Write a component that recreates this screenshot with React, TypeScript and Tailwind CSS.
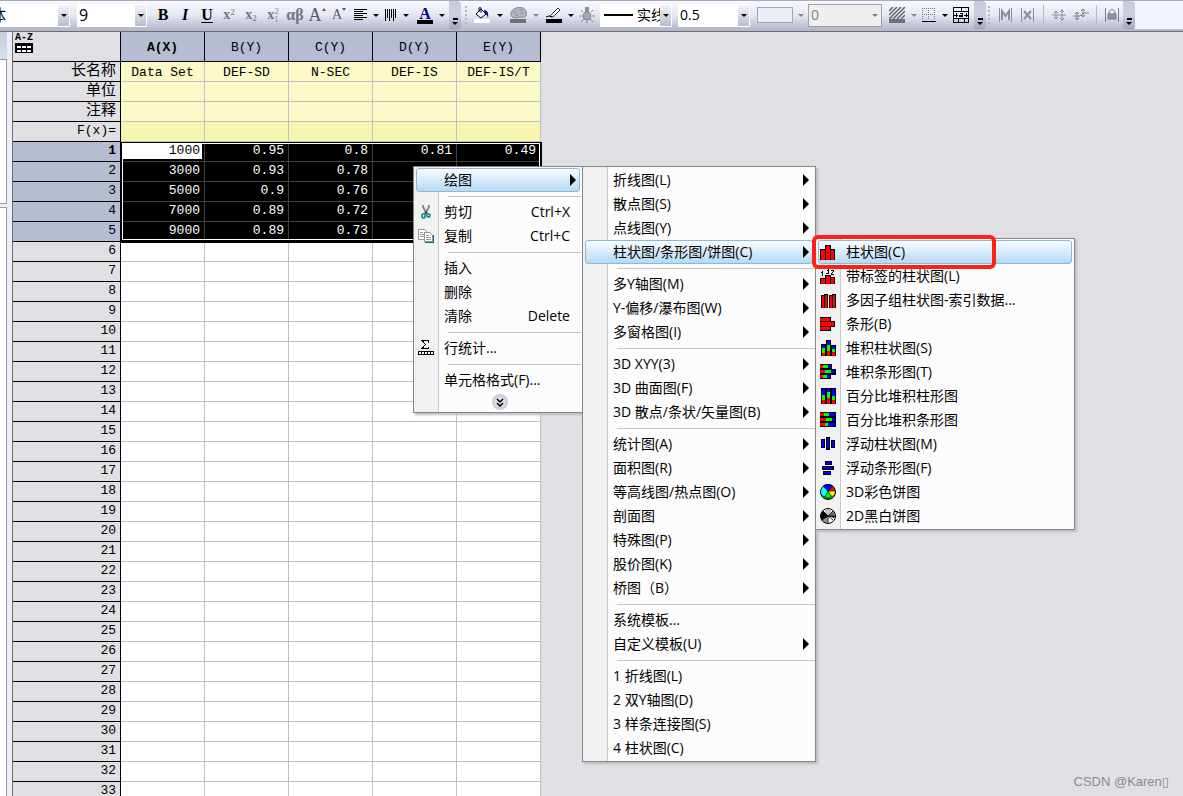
import type { ReactNode } from "react";

type Rect = [x: number, y: number, w: number, h: number, fill: string];

type MenuEntry = {
    label: string;
    shortcut?: string;
    icon?: ReactNode;
    arrow?: boolean;
    active?: boolean;
};

const R = "#ff0000";
const G = "#00ff00";
const B = "#0000ff";
const K = "#000000";

const uiFont = "font-['Open_Sans','Noto_Sans_CJK_SC',sans-serif]";
const sheetFont = "font-['Liberation_Mono','Noto_Sans_CJK_SC',monospace]";

/* ---------- menu icons ---------- */

function PixelIcon({ rects, children }: { rects: Rect[]; children?: ReactNode }) {
    return (
        <svg width="16" height="16" viewBox="0 0 16 16" shapeRendering="crispEdges" aria-hidden="true">
            {rects.map(([x, y, w, h, fill], i) => (
                <rect key={i} x={x} y={y} width={w} height={h} fill={fill} />
            ))}
            {children}
        </svg>
    );
}

const columnIcon = (
    <PixelIcon
        rects={[
            [0, 5, 6, 11, K], [5, 1, 6, 15, K], [10, 5, 5, 11, K],
            [1, 6, 4, 10, R], [6, 2, 4, 14, R], [11, 6, 3, 10, R],
        ]}
    />
);

const labeledColumnIcon = (
    <PixelIcon
        rects={[
            [0, 10, 6, 6, K], [5, 7, 6, 9, K], [10, 9, 5, 7, K],
            [1, 11, 4, 5, R], [6, 8, 4, 8, R], [11, 10, 3, 6, R],
            // 1
            [2, 3, 1, 5, K], [1, 4, 1, 1, K],
            // 3
            [6, 0, 3, 1, K], [8, 1, 1, 4, K], [7, 2, 1, 1, K], [6, 5, 3, 1, K],
            // 2
            [11, 2, 3, 1, K], [13, 3, 1, 1, K], [12, 4, 1, 1, K], [11, 5, 1, 1, K], [11, 6, 3, 1, K],
        ]}
    />
);

const multiFactorIcon = (
    <PixelIcon
        rects={[
            [1, 3, 4, 13, K], [4, 2, 4, 14, K], [9, 3, 4, 13, K], [12, 2, 4, 14, K],
            [2, 4, 2, 12, R], [5, 3, 2, 13, R], [10, 4, 2, 12, R], [13, 3, 2, 13, R],
        ]}
    />
);

const barIcon = (
    <PixelIcon
        rects={[
            [0, 1, 11, 5, K], [0, 5, 15, 6, K], [0, 10, 11, 5, K],
            [0, 2, 10, 3, R], [0, 6, 14, 4, R], [0, 11, 10, 3, R],
        ]}
    />
);

const stackedColumnIcon = (
    <PixelIcon
        rects={[
            [1, 4, 5, 12, K], [6, 0, 5, 16, K], [11, 5, 5, 11, K],
            [2, 5, 3, 3, B], [2, 8, 3, 5, G], [2, 13, 3, 3, R],
            [7, 1, 3, 4, B], [7, 5, 3, 6, G], [7, 11, 3, 5, R],
            [12, 6, 3, 3, B], [12, 9, 3, 3, G], [12, 12, 3, 4, R],
        ]}
    />
);

const stackedBarIcon = (
    <PixelIcon
        rects={[
            [0, 0, 12, 5, K], [0, 5, 16, 6, K], [0, 10, 11, 5, K],
            [0, 1, 3, 3, R], [3, 1, 5, 3, G], [8, 1, 3, 3, B],
            [0, 6, 5, 3, R], [5, 6, 6, 3, G], [11, 6, 4, 3, B],
            [0, 11, 3, 3, R], [3, 11, 4, 3, G], [7, 11, 3, 3, B],
        ]}
    />
);

const percentColumnIcon = (
    <PixelIcon
        rects={[
            [1, 0, 15, 16, K],
            [2, 1, 3, 6, B], [2, 7, 3, 5, G], [2, 12, 3, 4, R],
            [7, 1, 3, 3, B], [7, 4, 3, 6, G], [7, 10, 3, 6, R],
            [12, 1, 3, 7, B], [12, 8, 3, 4, G], [12, 12, 3, 4, R],
        ]}
    />
);

const percentBarIcon = (
    <PixelIcon
        rects={[
            [0, 0, 16, 15, K],
            [0, 1, 4, 3, R], [4, 1, 5, 3, G], [9, 1, 6, 3, B],
            [0, 6, 6, 3, R], [6, 6, 6, 3, G], [12, 6, 3, 3, B],
            [0, 11, 5, 3, R], [5, 11, 3, 3, G], [8, 11, 7, 3, B],
        ]}
    />
);

const floatColumnIcon = (
    <PixelIcon
        rects={[
            [1, 3, 4, 9, K], [6, 1, 4, 13, K], [11, 4, 4, 8, K],
            [2, 4, 2, 7, B], [7, 2, 2, 11, B], [12, 5, 2, 6, B],
        ]}
    />
);

const floatBarIcon = (
    <PixelIcon
        rects={[
            [5, 1, 7, 4, K], [2, 6, 12, 4, K], [3, 11, 8, 4, K],
            [6, 2, 5, 2, B], [3, 7, 10, 2, B], [4, 12, 6, 2, B],
        ]}
    />
);

const colorPieIcon = (
    <svg width="16" height="16" viewBox="0 0 16 16" aria-hidden="true">
        <circle cx="8" cy="8" r="7" fill="#00ffff" />
        <path d="M8 7 3 2a7 7 0 0 1 10 0Z" fill="#0000ff" />
        <path d="M8 7 13 2a7 7 0 0 1 2 5Z" fill="#ff0000" />
        <path d="M8 7h7a7 7 0 0 1-3 6Z" fill="#ffff00" />
        <path d="m8 7 4 6a7 7 0 0 1-7 0Z" fill="#00ff00" />
        <path d="M1 9q2 4 7 4t7-4q-1 6-7 6T1 9Z" fill="#008000" />
        <path d="M10 13q4-1 5-4 0 4-5 6Z" fill="#808000" />
        <path d="M8 7 3 2M8 7l5-5M8 7h7M8 7l4 6M8 7l-3 6" stroke="#000" strokeWidth=".7" />
        <circle cx="8" cy="8" r="7.500" fill="none" stroke="#000" />
    </svg>
);

const monoPieIcon = (
    <svg width="16" height="16" viewBox="0 0 16 16" aria-hidden="true">
        <circle cx="8" cy="8" r="7" fill="#fff" />
        <path d="M8 8 3 3a7 7 0 0 0-1 9Z" fill="#000" />
        <path d="m8 8-6 4a7 7 0 0 0 6 3Z" fill="#909090" />
        <path d="m8 8 5-5a7 7 0 0 1 2 5Z" fill="#707070" />
        <path d="M8 8h7a7 7 0 0 1-1 2Z" fill="#000" />
        <path d="M6 2v4M8 1v6M10 2v4" stroke="#888" />
        <path d="M8 8 3 3M8 8l5-5M8 8h7M8 8v7M8 8l5 4M8 8l-6 4" stroke="#000" strokeWidth=".8" />
        <circle cx="8" cy="8" r="7.500" fill="none" stroke="#000" />
    </svg>
);

const cutIcon = (
    <svg width="16" height="16" viewBox="0 0 16 16" fill="none" aria-hidden="true">
        <path d="M5 1v2l4 7M11 1v2L7 10" stroke="#8c8c8c" strokeWidth="2" />
        <path d="m8 7 1 3M8 7l-1 3" stroke="#104060" />
        <rect x="4" y="10" width="3" height="4" rx="1" stroke="#008080" strokeWidth="1.5" />
        <rect x="9" y="10" width="3" height="3" rx="1" stroke="#008080" strokeWidth="1.5" />
    </svg>
);

const copyIcon = (
    <svg width="16" height="16" viewBox="0 0 16 16" fill="none" shapeRendering="crispEdges" aria-hidden="true">
        <path d="M.5 1.5h6l3 3v7h-9Z" fill="#fff" stroke="#9a9a9a" />
        <path d="M2 4.500h3M2 6.500h4M2 8.500h4" stroke="#9a9a9a" />
        <path d="M6.500 4.500h5l3 3v6h-8Z" fill="#fff" stroke="#8a9a9a" />
        <path d="M8 7.500h3M8 9.500h5M8 11.500h5" stroke="#9a9a9a" />
        <path d="M15 7v7H7" stroke="#107070" />
    </svg>
);

const statsIcon = (
    <svg width="16" height="16" viewBox="0 0 16 16" fill="none" shapeRendering="crispEdges" aria-hidden="true">
        <path d="M10.500 3V.5H4L7.500 4.500 4 8.500h6.500V7" stroke="#000" />
        <path d="M.5 11.500h15v3H.5ZM3.500 12v2M6.500 12v2M9.500 12v2M12.500 12v2" fill="#fff" stroke="#000" />
    </svg>
);

/* ---------- menus ---------- */

const contextEntries: (MenuEntry | null)[] = [
    { label: "绘图", arrow: true, active: true },
    null,
    { label: "剪切", shortcut: "Ctrl+X", icon: cutIcon },
    { label: "复制", shortcut: "Ctrl+C", icon: copyIcon },
    null,
    { label: "插入" },
    { label: "删除" },
    { label: "清除", shortcut: "Delete" },
    null,
    { label: "行统计...", icon: statsIcon },
    null,
    { label: "单元格格式(F)..." },
];

const plotEntries: (MenuEntry | null)[] = [
    { label: "折线图(L)", arrow: true },
    { label: "散点图(S)", arrow: true },
    { label: "点线图(Y)", arrow: true },
    { label: "柱状图/条形图/饼图(C)", arrow: true, active: true },
    null,
    { label: "多Y轴图(M)", arrow: true },
    { label: "Y-偏移/瀑布图(W)", arrow: true },
    { label: "多窗格图(I)", arrow: true },
    null,
    { label: "3D XYY(3)", arrow: true },
    { label: "3D 曲面图(F)", arrow: true },
    { label: "3D 散点/条状/矢量图(B)", arrow: true },
    null,
    { label: "统计图(A)", arrow: true },
    { label: "面积图(R)", arrow: true },
    { label: "等高线图/热点图(O)", arrow: true },
    { label: "剖面图", arrow: true },
    { label: "特殊图(P)", arrow: true },
    { label: "股价图(K)", arrow: true },
    { label: "桥图（B）", arrow: true },
    null,
    { label: "系统模板..." },
    { label: "自定义模板(U)", arrow: true },
    null,
    { label: "1 折线图(L)" },
    { label: "2 双Y轴图(D)" },
    { label: "3 样条连接图(S)" },
    { label: "4 柱状图(C)" },
];

const chartEntries: (MenuEntry | null)[] = [
    { label: "柱状图(C)", icon: columnIcon, active: true },
    { label: "带标签的柱状图(L)", icon: labeledColumnIcon },
    { label: "多因子组柱状图-索引数据...", icon: multiFactorIcon },
    { label: "条形(B)", icon: barIcon },
    { label: "堆积柱状图(S)", icon: stackedColumnIcon },
    { label: "堆积条形图(T)", icon: stackedBarIcon },
    { label: "百分比堆积柱形图", icon: percentColumnIcon },
    { label: "百分比堆积条形图", icon: percentBarIcon },
    { label: "浮动柱状图(M)", icon: floatColumnIcon },
    { label: "浮动条形图(F)", icon: floatBarIcon },
    { label: "3D彩色饼图", icon: colorPieIcon },
    { label: "2D黑白饼图", icon: monoPieIcon },
];

function Menu({ entries, className, children }: { entries: (MenuEntry | null)[]; className: string; children?: ReactNode }) {
    return (
        <div
            role="menu"
            className={`absolute border border-[#868686] bg-[linear-gradient(to_right,#f1f1f1_24px,#c9c9c9_24px,#c9c9c9_25px,#fcfcfc_25px)] pt-px shadow-[2px_2px_2px_#bcbcc0] text-sm leading-none text-black ${uiFont} ${className}`}
        >
            {entries.map((entry, i) =>
                entry ? (
                    <div key={i} className="px-0.5">
                        <button
                            type="button"
                            role="menuitem"
                            className={`flex h-6 w-full items-center rounded-[3px] border pl-px pr-[3px] text-left whitespace-nowrap ${
                                entry.active
                                    ? "border-[#8fb8d8] bg-linear-to-b from-[#f8fcff] to-[#b5daf3]"
                                    : "border-transparent"
                            }`}
                        >
                            <span className="mr-[10px] size-4 shrink-0">{entry.icon}</span>
                            <span className="flex-1">{entry.label}</span>
                            {entry.shortcut && <span className="mr-1.5">{entry.shortcut}</span>}
                            {entry.arrow && (
                                <svg width="6" height="12" viewBox="0 0 6 12" aria-hidden="true">
                                    <path d="M0 0v12l6-6Z" fill="#000" />
                                </svg>
                            )}
                        </button>
                    </div>
                ) : (
                    <div key={i} role="separator" className="flex h-2 items-center pl-[34px]">
                        <div className="h-px w-full bg-[#c5c5c5]" />
                    </div>
                ),
            )}
            {children}
        </div>
    );
}

/* ---------- toolbar ---------- */

function Tool({ label, className = "w-[22px]", children }: { label: string; className?: string; children: ReactNode }) {
    return (
        <button type="button" aria-label={label} className={`flex h-6 shrink-0 items-center justify-center ${className}`}>
            {children}
        </button>
    );
}

function Caret({ className = "text-black" }: { className?: string }) {
    return (
        <svg width="6" height="3" viewBox="0 0 6 3" className={`shrink-0 ${className}`} aria-hidden="true">
            <path d="M0 0h6L3 3Z" fill="currentColor" />
        </svg>
    );
}

function Combo({ label, value, className, selectClass = "text-base", muted = false, children }: {
    label: string;
    value: string;
    className: string;
    selectClass?: string;
    muted?: boolean;
    children?: ReactNode;
}) {
    return (
        <label className={`flex h-[23px] shrink-0 items-center overflow-hidden ${uiFont} ${className}`}>
            {children}
            <select aria-label={label} className={`h-full min-w-0 flex-1 appearance-none bg-transparent leading-none ${selectClass}`}>
                <option>{value}</option>
            </select>
            <span
                className={`flex h-full w-3 shrink-0 items-center justify-center ${
                    muted ? "bg-[#efefef]" : "border-y border-r border-white bg-linear-to-b from-[#f4f4fa] to-[#b9bccf]"
                }`}
            >
                <Caret className={muted ? "text-[#808080]" : "text-black"} />
            </span>
        </label>
    );
}

function Grip() {
    return (
        <svg width="3" height="18" viewBox="0 0 3 18" shapeRendering="crispEdges" className="shrink-0" aria-hidden="true">
            {[0, 4, 8, 12, 16].map((y) => (
                <rect key={y} x="0" y={y} width="2" height="2" fill="#b4b5c4" />
            ))}
        </svg>
    );
}

function EndCap() {
    return (
        <button
            type="button"
            aria-label="Toolbar options"
            className="flex h-7 w-3 shrink-0 flex-col items-center justify-end gap-0.5 self-start rounded-r-sm bg-linear-to-b from-[#c9cbdc] via-[#cdcfdf] to-[#a4a6c0] pb-1"
        >
            <span className="h-0.5 w-[5px] bg-black" />
            <Caret />
        </button>
    );
}

function Divider() {
    return <span className="mx-1 h-5 w-px shrink-0 bg-[#b8b9c6]" />;
}

function Toolbar() {
    const band = "flex h-7 shrink-0 items-center bg-linear-to-b from-[#f7f8fe] via-[#e6e8f3] to-[#b7b9d0]";
    return (
        <header className="flex h-8 shrink-0 overflow-hidden border-t border-b border-t-[#a9a9bd] border-b-[#6e6e6e] bg-[#f1f4fd] shadow-[inset_0_-2px_0_#b4b8cc]">
            <div className={band}>
                <Combo label="Font" value="宋体" className="w-[70px] bg-white" selectClass="-ml-[26px] text-base" />
                <Combo label="Font size" value="9" className="ml-[7px] w-[70px] bg-white" selectClass="pl-0.5 text-base" />
                <div className="ml-[5px] flex items-center font-['Liberation_Serif',serif]">
                    <Tool label="Bold"><b className="text-base">B</b></Tool>
                    <Tool label="Italic"><b className="text-base italic">I</b></Tool>
                    <Tool label="Underline"><b className="text-base underline underline-offset-2">U</b></Tool>
                    <Tool label="Superscript">
                        <span className="text-sm font-bold text-[#74757f]">x<sup className="text-[9px] font-normal">2</sup></span>
                    </Tool>
                    <Tool label="Subscript">
                        <span className="text-sm font-bold text-[#74757f]">x<sub className="text-[9px] font-normal">2</sub></span>
                    </Tool>
                    <Tool label="Super and subscript">
                        <span className="text-sm font-bold text-[#74757f]">x</span>
                        <span className="flex flex-col text-[9px] leading-[8px] text-[#8a8b96]">
                            <span>2</span>
                            <span>1</span>
                        </span>
                    </Tool>
                    <Tool label="Greek"><span className="text-base font-bold text-[#74757f]">αβ</span></Tool>
                    <Tool label="Increase font">
                        <span className="text-lg text-[#555662]">A</span>
                        <svg width="4" height="14" viewBox="0 0 4 14" aria-hidden="true"><path d="M0 3h4L2 0Z" fill="#555662" /></svg>
                    </Tool>
                    <Tool label="Decrease font">
                        <span className="text-sm text-[#555662]">A</span>
                        <svg width="4" height="14" viewBox="0 0 4 14" aria-hidden="true"><path d="M0 0h4L2 3Z" fill="#555662" /></svg>
                    </Tool>
                </div>
                <Tool label="Align">
                    <svg width="14" height="12" viewBox="0 0 14 12" shapeRendering="crispEdges" aria-hidden="true">
                        <path d="M0 .5h13M0 2.500h9M0 4.500h13M0 6.500h9M0 8.500h13M0 10.500h9" stroke="#000" />
                    </svg>
                </Tool>
                <Tool label="Align options" className="w-2"><Caret /></Tool>
                <Tool label="Text direction">
                    <svg width="12" height="12" viewBox="0 0 12 12" shapeRendering="crispEdges" aria-hidden="true">
                        <path d="M.5 0v12M2.500 0v9M4.500 0v12M6.500 0v9M8.500 0v12M10.500 0v9" stroke="#000" />
                    </svg>
                </Tool>
                <Tool label="Text direction options" className="w-2"><Caret /></Tool>
                <Tool label="Font color" className="ml-1 w-[22px] flex-col">
                    <span className="font-['Liberation_Serif',serif] text-base leading-[13px] font-bold text-[#000080]">A</span>
                    <span className="h-1 w-4 bg-black" />
                </Tool>
                <Tool label="Font color options" className="mr-px w-3"><Caret /></Tool>
                <EndCap />
            </div>

            <div className={`${band} pl-1`}>
                <Grip />
                <Tool label="Fill color" className="ml-[3px] w-[22px]">
                    <svg width="16" height="16" viewBox="0 0 16 16" aria-hidden="true">
                        <path d="m2 7 5-5 5 5-5 4Z" fill="#fff" stroke="#000" />
                        <path d="M5 5V1q1-1 2 0v5" fill="none" stroke="#000080" />
                        <path d="M10 3q5 0 4 8-1-4-3-4Z" fill="#000080" />
                        <rect x="0" y="12" width="16" height="4" fill="#fff" />
                    </svg>
                </Tool>
                <Tool label="Fill color options" className="w-[14px]"><Caret /></Tool>
                <Tool label="Palette">
                    <svg width="17" height="16" viewBox="0 0 17 16" aria-hidden="true">
                        <path d="M2 10Q-1 5 4 2q4-3 9-1 5 3 3 8-2 2-5 1-2 0-3 1-4 0-6-1Z" fill="#b4b6c2" stroke="#85878f" />
                        <path d="M3 5h4M9 3h4M5 8h3M10 7l4-2" stroke="#888a95" />
                        <rect x="0" y="12" width="16" height="4" fill="#6f7078" />
                    </svg>
                </Tool>
                <Tool label="Palette options" className="w-[14px]"><Caret className="text-[#85868f]" /></Tool>
                <Tool label="Line color">
                    <svg width="16" height="16" viewBox="0 0 16 16" aria-hidden="true">
                        <path d="m4 9 8-8 2 2-7 7Z" fill="#fff" stroke="#333" />
                        <path d="M0 10q3-2 6 0" stroke="#000" fill="none" />
                        <rect x="0" y="12" width="16" height="4" fill="#000" />
                    </svg>
                </Tool>
                <Tool label="Line color options" className="w-3"><Caret /></Tool>
                <Tool label="Lighting" className="w-5">
                    <svg width="16" height="16" viewBox="0 0 16 16" aria-hidden="true">
                        <path d="M8 13v3M0 9h3M13 9h3M2 3l2 2M14 3l-2 2M2 15l3-3M14 15l-3-3" stroke="#85878f" />
                        <circle cx="8" cy="9" r="4" fill="#a3a8b6" stroke="#85878f" />
                        <rect x="6" y="0" width="4" height="5" fill="#8a8e9c" />
                    </svg>
                </Tool>
                <Combo label="Line style" value="实线" className="ml-[3px] w-[72px] bg-white" selectClass="pl-1 text-sm">
                    <span className="ml-1 h-0.5 w-[29px] shrink-0 bg-black" />
                </Combo>
                <Combo label="Line width" value="0.5" className="ml-1.5 w-[72px] bg-white" selectClass="pl-0.5 text-sm" />
                <Tool label="Pattern" className="ml-[7px] w-9">
                    <span className="h-4 w-full border border-[#a3a5b5] bg-[#eceef6]" />
                </Tool>
                <Tool label="Pattern options" className="w-[15px]"><Caret className="text-[#85868f]" /></Tool>
                <Combo
                    label="Spacing"
                    value="0"
                    muted
                    className="w-[74px] border border-[#a0a0a4] bg-[#efefef]"
                    selectClass="pl-0.5 text-sm text-[#808080]"
                />
                <Tool label="Hatch" className="ml-1 w-[22px]">
                    <svg width="16" height="16" viewBox="0 0 16 16" aria-hidden="true">
                        <path d="M0 4l4-4M0 8l8-8M0 12 12 0M4 12 16 0M8 12l8-8M12 12l4-4" stroke="#62646e" strokeWidth="1.5" />
                        <rect x="0" y="12" width="16" height="4" fill="#6f7078" />
                    </svg>
                </Tool>
                <Tool label="Hatch options" className="w-[11px]"><Caret className="text-[#85868f]" /></Tool>
                <Tool label="Borders" className="w-5">
                    <svg width="14" height="14" viewBox="0 0 14 14" shapeRendering="crispEdges" aria-hidden="true">
                        <path d="M0 .5h13M0 6.500h13M.5 0v12M6.500 0v12M12.500 0v12" stroke="#777" strokeDasharray="1 1" />
                        <path d="M0 13.500h14" stroke="#000" />
                    </svg>
                </Tool>
                <Tool label="Borders options" className="w-[11px]"><Caret /></Tool>
                <Tool label="Merge cells">
                    <svg width="16" height="16" viewBox="0 0 16 16" fill="none" shapeRendering="crispEdges" aria-hidden="true">
                        <path d="M.5.5h15v15H.5ZM0 4.500h16M0 11.500h16M8 0v4M5 12v4M11 12v4M1 8h4M11 8h4" stroke="#000" />
                        <path d="M3 6v4M13 6v4M6.500 6.500h3v3h-3v-1.500h3" stroke="#000" />
                    </svg>
                </Tool>
                <span className="w-0.5" />
                <EndCap />
            </div>

            <div className={`${band} pl-0.5`}>
                <Grip />
                <Tool label="Mask" className="ml-1 w-[22px]">
                    <svg width="14" height="14" viewBox="0 0 14 14" fill="none" stroke="#8b8d9a" aria-hidden="true">
                        <path d="M.5 0v14M12.500 0v14" />
                        <path d="M3 12V3l3.500 5L10 3v9" strokeWidth="2" />
                    </svg>
                </Tool>
                <Tool label="Unmask">
                    <svg width="14" height="14" viewBox="0 0 14 14" fill="none" stroke="#8b8d9a" aria-hidden="true">
                        <path d="M.5 0v14M12.500 0v14" />
                        <path d="m3 3 7 8M10 3l-7 8" strokeWidth="2" />
                    </svg>
                </Tool>
                <Divider />
                <Tool label="Move points">
                    <svg width="14" height="14" viewBox="0 0 14 14" fill="none" stroke="#8b8d9a" aria-hidden="true">
                        <path d="M0 7h14M4 3v8M10 1v12" />
                        <path d="m2 5 2-2 2 2M2 9l2 2 2-2M8 4l2-2 2 2M8 10l2 2 2-2" />
                    </svg>
                </Tool>
                <Tool label="Swap points">
                    <svg width="16" height="14" viewBox="0 0 16 14" fill="none" stroke="#7b7d8a" aria-hidden="true">
                        <path d="M0 8h7l3-3h6M4 5v7M10 1v8" />
                        <path d="m2 6 2-2 2 2M2 10l2 2 2-2M8 3l2-2 2 2M8 7l2 2 2-2" />
                    </svg>
                </Tool>
                <Divider />
                <Tool label="Lock">
                    <svg width="14" height="14" viewBox="0 0 14 14" fill="none" stroke="#7b7d8a" aria-hidden="true">
                        <path d="M.5 0v14M13.500 0v14" />
                        <path d="M4 6V4q3-5 6 0v2" />
                        <rect x="3" y="6" width="8" height="5" fill="#9093a2" />
                    </svg>
                </Tool>
                <EndCap />
            </div>
        </header>
    );
}

/* ---------- worksheet ---------- */

const columns = ["A(X)", "B(Y)", "C(Y)", "D(Y)", "E(Y)"];
const longNames = ["Data Set", "DEF-SD", "N-SEC", "DEF-IS", "DEF-IS/T"];
const data = [
    ["1000", "0.95", "0.8", "0.81", "0.49"],
    ["3000", "0.93", "0.78", "", ""],
    ["5000", "0.9", "0.76", "", ""],
    ["7000", "0.89", "0.72", "", ""],
    ["9000", "0.89", "0.73", "", ""],
];
const rowNumbers = Array.from({ length: 33 }, (_, i) => i + 1);

function Worksheet() {
    const labelCell = "h-5 border-r border-b border-black pt-0 pr-1 pl-0 text-right";
    return (
        <div className="relative">
            <table className={`w-[528px] table-fixed border-separate border-spacing-0 text-[13px] leading-[17px] text-black ${sheetFont}`}>
                <colgroup>
                    <col className="w-[108px]" />
                    {columns.map((c) => (
                        <col key={c} className="w-[84px]" />
                    ))}
                </colgroup>
                <thead>
                    <tr>
                        <th className="h-[30px] border-r border-b border-black p-0 pt-0.5 pl-0.5 align-top">
                            <div className="text-left text-[10px] leading-[8px]">A-Z</div>
                            <svg width="18" height="10" viewBox="0 0 18 10" shapeRendering="crispEdges" className="mt-px" aria-hidden="true">
                                <rect width="18" height="10" fill="#000" />
                                <path d="M2 4h4M7 4h4M12 4h4M2 8h4M7 8h4M12 8h4" stroke="#fff" strokeWidth="2" />
                            </svg>
                        </th>
                        {columns.map((c, i) => (
                            <th
                                key={c}
                                scope="col"
                                className={`border-r border-b border-black bg-[#b6bcd2] p-0 pt-0.5 ${i === 0 ? "font-bold" : "font-normal"}`}
                            >
                                {c}
                            </th>
                        ))}
                    </tr>
                </thead>
                <tbody>
                    {["长名称", "单位", "注释", "F(x)="].map((label, r) => (
                        <tr key={label}>
                            <th scope="row" className={`${labelCell} font-normal ${r < 3 ? "pb-0 text-[15px]" : "pb-0.5"}`}>{label}</th>
                            {columns.map((c, i) => (
                                <td
                                    key={c}
                                    className={`border-r border-b border-[#c0c0c0] p-0 pt-0.5 text-center ${r === 3 ? "bg-[#f7f5b0]" : "bg-[#fbf9c8]"}`}
                                >
                                    {r === 0 && longNames[i]}
                                </td>
                            ))}
                        </tr>
                    ))}
                    {rowNumbers.map((n) => {
                        const selected = n <= data.length;
                        return (
                            <tr key={n}>
                                <th
                                    scope="row"
                                    className={`${labelCell} pb-0.5 ${selected ? "bg-[#b6bcd2]" : ""} ${n === 1 ? "font-bold" : "font-normal"}`}
                                >
                                    {n}
                                </th>
                                {columns.map((c, i) => (
                                    <td
                                        key={c}
                                        className={`border-r border-b pt-0 pb-0.5 text-right ${
                                            selected ? "border-[#404040] bg-black text-white" : "border-[#c0c0c0] bg-white"
                                        } ${n === 1 && i === 0 ? "pr-0.5 pl-0.5" : "pr-1 pl-0"}`}
                                    >
                                        {n === 1 && i === 0 ? (
                                            <div className="bg-white pr-0.5 text-black">{data[0][0]}</div>
                                        ) : (
                                            data[n - 1]?.[i]
                                        )}
                                    </td>
                                ))}
                            </tr>
                        );
                    })}
                </tbody>
            </table>
            {/* selection frame */}
            <div className="pointer-events-none absolute top-[110px] left-[108px] h-[101px] w-[421px] border border-r-2 border-b-3 border-black">
                <div className="h-full border border-white" />
            </div>
        </div>
    );
}

export default function App() {
    return (
        <div className="relative flex h-screen flex-col overflow-hidden bg-[#e0dfe4]">
            <Toolbar />
            <main className="flex min-h-0 flex-1">
                <aside className="flex w-3 shrink-0 flex-col bg-[#eceefa] pr-[5px]">
                    <div className="h-[27px] shrink-0 bg-linear-to-b from-[#c4d0dc] to-[#d3e2ef]" />
                    <div className="h-[145px] shrink-0 border-t border-r border-b border-[#9c9ca0] bg-white" />
                    <div className="mt-[3px] flex-1 border-t border-r border-[#9c9ca0] bg-white" />
                </aside>
                <div className="border-l border-[#6e6e6e]">
                    <Worksheet />
                </div>
            </main>

            <Menu entries={contextEntries} className="top-[166px] left-[413px] w-[170px]">
                <div className="flex h-5 items-end justify-center pb-0.5 pl-1">
                    <button
                        type="button"
                        aria-label="Show more"
                        className="flex size-4 items-center justify-center rounded-full bg-radial from-[#f4f4fa] to-[#b4b6cc]"
                    >
                        <svg width="8" height="9" viewBox="0 0 8 9" fill="none" stroke="#000" strokeWidth="1.5" aria-hidden="true">
                            <path d="m1 1 3 3 3-3M1 5l3 3 3-3" />
                        </svg>
                    </button>
                </div>
            </Menu>
            <Menu entries={plotEntries} className="top-[166px] left-[582px] w-[234px] pb-px" />
            <Menu entries={chartEntries} className="top-[238px] left-[815px] w-[260px] pb-px" />
            <div className="pointer-events-none absolute top-[235px] left-[812px] h-[34px] w-[184px] rounded-md border-4 border-[#fb2213]" />

            <div className="absolute right-3.5 bottom-1.5 font-['Liberation_Sans','DejaVu_Sans',sans-serif] text-[13px] leading-4 text-[#8c8c90]">
                CSDN @Karen▯
            </div>
        </div>
    );
}
